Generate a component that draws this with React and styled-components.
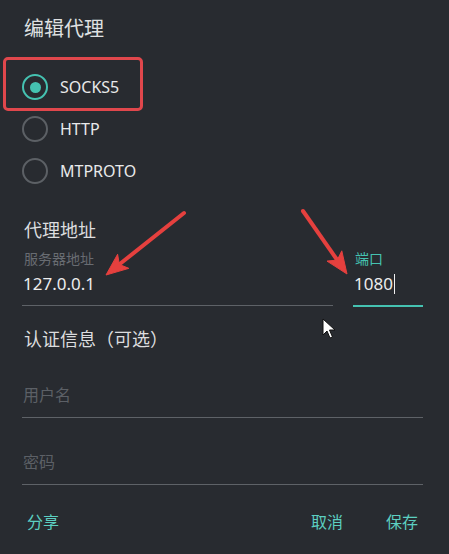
import React from "react";
import styled, { createGlobalStyle } from "styled-components";

const GlobalStyle = createGlobalStyle`
  html, body {
    margin: 0;
    padding: 0;
    background: #282b30;
  }
  body {
    font-family: "Noto Sans", "Noto Sans CJK SC", sans-serif;
  }
`;

const Dialog = styled.div`
  position: relative;
  width: 449px;
  height: 554px;
  box-sizing: border-box;
  padding: 14px 26px 0 22px;
  background: #282b30;
  color: #e6e7e8;
  overflow: hidden;
`;

const Title = styled.div`
  font-family: "Noto Sans CJK SC", sans-serif;
  font-size: 20px;
  line-height: 28px;
  padding-left: 2px;
  color: #dfe0e1;
`;

const RadioGroup = styled.div`
  position: relative;
  margin-top: 24px;
`;

const RadioRow = styled.label`
  display: flex;
  align-items: center;
  gap: 12px;
  height: 42px;
  font-size: 16px;
  color: #e8e9ea;
`;

const Circle = styled.span`
  box-sizing: border-box;
  width: 26px;
  height: 26px;
  border-radius: 50%;
  border: 2px solid ${(p) => (p.$on ? "#45c2b1" : "#5c6065")};
  display: flex;
  align-items: center;
  justify-content: center;
  &::after {
    content: "";
    width: 11px;
    height: 11px;
    border-radius: 50%;
    background: #45c2b1;
    display: ${(p) => (p.$on ? "block" : "none")};
  }
`;

const HighlightBox = styled.div`
  position: absolute;
  left: -19px;
  top: -9px;
  width: 140px;
  height: 54px;
  box-sizing: border-box;
  border: 3px solid #e0474c;
  border-radius: 5px;
  pointer-events: none;
`;

const Heading = styled.div`
  font-family: "Noto Sans CJK SC", sans-serif;
  font-size: 18px;
  line-height: 26px;
  padding-left: 2px;
  margin-top: ${(p) => p.$top}px;
  color: #dcdddf;
`;

const FieldRow = styled.div`
  display: flex;
  gap: 20px;
`;

const Field = styled.div`
  display: flex;
  flex-direction: column;
  flex: ${(p) => (p.$width ? `0 0 ${p.$width}px` : "1")};
  margin-top: ${(p) => p.$top || 0}px;
`;

const Label = styled.div`
  font-family: "Noto Sans CJK SC", sans-serif;
  font-size: 14px;
  line-height: 20px;
  margin-top: 6px;
  padding-left: 2px;
  color: ${(p) => (p.$focus ? "#45c2b1" : "#686c72")};
`;

const Value = styled.div`
  display: flex;
  align-items: center;
  line-height: 24px;
  padding: ${(p) => (p.$placeholder ? "0 0 11px 1px" : "4px 0 9px 1px")};
  color: ${(p) => (p.$placeholder ? "#5c6066" : "#eceded")};
  font-family: ${(p) =>
    p.$placeholder ? '"Noto Sans CJK SC", sans-serif' : '"Noto Sans", sans-serif'};
  font-size: ${(p) => (p.$placeholder ? 16 : 17)}px;
  border-bottom: ${(p) => (p.$focus ? "2px solid #45c2b1" : "1px solid #5e6267")};
  margin-bottom: ${(p) => (p.$focus ? -1 : 0)}px;
`;

const Caret = styled.span`
  display: inline-block;
  width: 1px;
  height: 20px;
  margin-left: 1px;
  background: #f0f0f0;
`;

const Actions = styled.div`
  display: flex;
  align-items: center;
  margin-top: 24px;
  padding-right: 5px;
`;

const TextButton = styled.button`
  background: none;
  border: none;
  padding: 0;
  font-family: "Noto Sans CJK SC", sans-serif;
  font-size: 16px;
  line-height: 24px;
  color: #5ccfc1;
  margin-left: ${(p) => p.$gap || 0}px;
  &:first-child {
    margin-left: 5px;
    margin-right: auto;
  }
`;

const Overlay = styled.svg`
  position: absolute;
  left: 0;
  top: 0;
  pointer-events: none;
`;

function Arrow({ x1, y1, x2, y2 }) {
  const dx = x2 - x1;
  const dy = y2 - y1;
  const len = Math.hypot(dx, dy);
  const ux = dx / len;
  const uy = dy / len;
  const head = 22;
  const bx = x2 - ux * head;
  const by = y2 - uy * head;
  const w = 9;
  return (
    <g fill="#e5403e" stroke="#e5403e">
      <line x1={x1} y1={y1} x2={bx + ux * 4} y2={by + uy * 4} strokeWidth="4" strokeLinecap="round" />
      <polygon
        points={`${x2},${y2} ${bx - uy * w},${by + ux * w} ${bx + ux * 5},${by + uy * 5} ${bx + uy * w},${by - ux * w}`}
        strokeWidth="1"
        strokeLinejoin="round"
      />
    </g>
  );
}

export default function App() {
  return (
    <>
      <GlobalStyle />
      <Dialog>
        <Title>编辑代理</Title>
        <RadioGroup>
          <RadioRow>
            <Circle $on />
            SOCKS5
          </RadioRow>
          <RadioRow>
            <Circle />
            HTTP
          </RadioRow>
          <RadioRow>
            <Circle />
            MTPROTO
          </RadioRow>
          <HighlightBox />
        </RadioGroup>

        <Heading $top={24}>代理地址</Heading>
        <FieldRow>
          <Field>
            <Label>服务器地址</Label>
            <Value>127.0.0.1</Value>
          </Field>
          <Field $width={70}>
            <Label $focus>端口</Label>
            <Value $focus>
              1080
              <Caret />
            </Value>
          </Field>
        </FieldRow>

        <Heading $top={19}>认证信息（可选）</Heading>
        <Field $top={31}>
          <Value $placeholder>用户名</Value>
        </Field>
        <Field $top={31}>
          <Value $placeholder>密码</Value>
        </Field>

        <Actions>
          <TextButton>分享</TextButton>
          <TextButton>取消</TextButton>
          <TextButton $gap={43}>保存</TextButton>
        </Actions>

        <Overlay width="449" height="554" viewBox="0 0 449 554">
          <Arrow x1={184} y1={213} x2={106} y2={275} />
          <Arrow x1={303} y1={211} x2={347} y2={274} />
          <path
            d="M323 319 L323 335 L327 331 L330 338 L332.5 337 L329.5 330 L335 330 Z"
            fill="#ffffff"
            stroke="#111"
            strokeWidth="1"
            strokeLinejoin="round"
          />
        </Overlay>
      </Dialog>
    </>
  );
}
